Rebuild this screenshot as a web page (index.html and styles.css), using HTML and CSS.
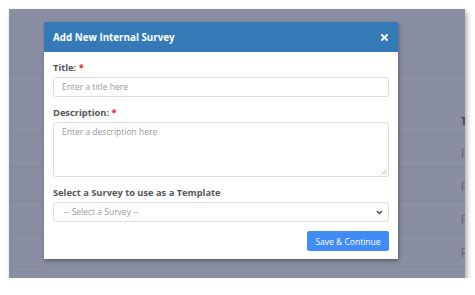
FILE: index.html
```html
<!DOCTYPE html>
<html>
<head>
<meta charset="utf-8">
<link rel="stylesheet" href="styles.css">
</head>
<body>
<div class="shot">
  <div class="page">
    <div class="topbar"></div>
    <div class="table">
      <div class="row head"><span>T</span></div>
      <div class="row"><span>p</span></div>
      <div class="row"><span>p</span></div>
      <div class="row"><span>p</span></div>
      <div class="row"><span>p</span></div>
    </div>
  </div>
  <div class="modal">
    <div class="modal-header">
      <span class="modal-title">Add New Internal Survey</span>
      <svg class="close" width="7" height="7" viewBox="0 0 7 7"><path d="M1 1L6 6M6 1L1 6" stroke="#fff" stroke-width="2" stroke-linecap="square"/></svg>
    </div>
    <div class="modal-body">
      <label class="label">Title: <span class="req">*</span></label>
      <div class="input">Enter a title here</div>
      <label class="label">Description: <span class="req">*</span></label>
      <div class="input textarea">Enter a description here
        <svg class="grip" width="6" height="6" viewBox="0 0 6 6"><path d="M5.5 0.5L0.5 5.5M5.5 3L3 5.5" stroke="#aaa" stroke-width="0.8"/></svg>
      </div>
      <label class="label">Select a Survey to use as a Template</label>
      <div class="input select">-- Select a Survey --
        <svg class="chev" width="7" height="5" viewBox="0 0 7 5"><path d="M1 1L3.5 3.5L6 1" stroke="#444" stroke-width="1.4" fill="none"/></svg>
      </div>
      <div class="actions"><button class="btn">Save &amp; Continue</button></div>
    </div>
  </div>
</div>
</body>
</html>
```
FILE: styles.css
```css
* { box-sizing: border-box; }
body {
  margin: 0;
  background: #fff;
  font-family: "Open Sans", "DejaVu Sans", sans-serif;
}
.shot {
  position: relative;
  margin: 9px 0 0 9px;
  width: 456px;
  height: 269px;
  overflow: hidden;
  background: #898ea3;
  box-shadow: 2px 3px 5px rgba(0,0,0,0.35);
}
.topbar {
  height: 65px;
  border-bottom: 1px solid #7f8498;
}
.table { padding-top: 34px; }
.row {
  height: 33px;
  border-bottom: 1px solid #82879b;
  display: flex;
  align-items: center;
  padding-left: 452px;
  font-size: 10px;
  color: #5a5e6e;
}
.row.head { font-weight: 700; color: #3e4150; height: 27px; }
.modal {
  position: absolute;
  left: 35px;
  top: 13px;
  width: 354px;
  height: 237px;
  background: #fff;
  box-shadow: 1px 2px 4px rgba(0,0,0,0.35);
}
.modal-header {
  height: 30px;
  background: #337ab7;
  display: flex;
  align-items: center;
  justify-content: space-between;
  padding: 0 10px 0 9px;
}
.modal-title {
  color: #fff;
  font-weight: 700;
  font-size: 9.8px;
}
.modal-body {
  padding: 9px 9px 0 9px;
  display: flex;
  flex-direction: column;
}
.label {
  font-size: 9.3px;
  font-weight: 700;
  color: #555;
  height: 13px;
  line-height: 13px;
  margin-bottom: 3px;
}
.req { color: #e11; }
.input {
  position: relative;
  height: 20px;
  border: 1px solid #ddd;
  border-radius: 3px;
  font-size: 8.5px;
  color: #999;
  padding: 0 8px;
  line-height: 18px;
  margin-bottom: 9px;
}
.textarea {
  height: 55px;
  line-height: 1;
  padding-top: 5px;
}
.grip { position: absolute; right: 1px; bottom: 1px; }
.select { padding-left: 10px; margin-bottom: 9px; }
.chev { position: absolute; right: 5px; top: 7px; }
.actions { display: flex; justify-content: flex-end; }
.btn {
  width: 82px;
  height: 20px;
  border: 0;
  border-radius: 2px;
  background: #418bf7;
  color: #fff;
  font-family: inherit;
  font-size: 8.5px;
  padding: 0;
}
```
